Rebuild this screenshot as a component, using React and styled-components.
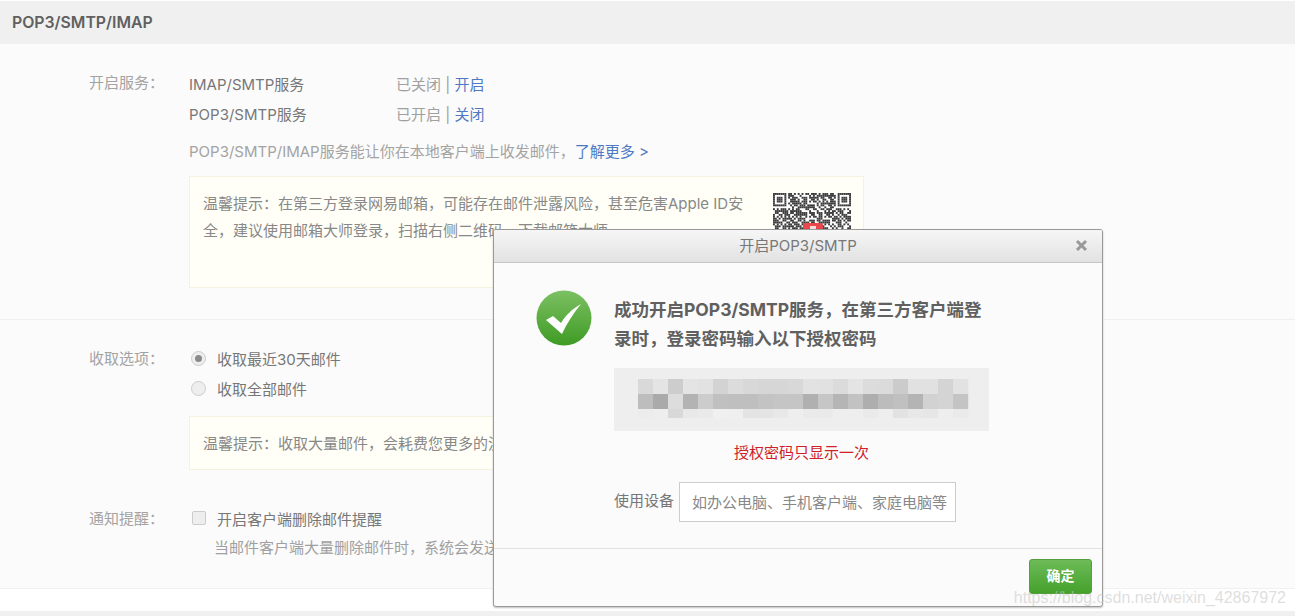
import React from "react";
import styled, { createGlobalStyle } from "styled-components";

const FONT = `Inter, "Noto Sans CJK SC", sans-serif`;

const GlobalStyle = createGlobalStyle`
  html, body {
    margin: 0;
    padding: 0;
    background: #fff;
  }
  body {
    font-family: ${FONT};
    font-size: 15px;
    color: #666;
  }
`;

const Page = styled.div`
  position: relative;
  width: 1295px;
  height: 616px;
  overflow: hidden;
  background: #fff;
  padding-top: 1px;
  box-sizing: border-box;
`;

const Header = styled.h2`
  margin: 0;
  height: 43px;
  line-height: 43px;
  padding-left: 12px;
  background: #f0f0f0;
  font-size: 15.8px;
  font-weight: 600;
  color: #606060;
`;

const Body = styled.div`
  height: 545px;
  background: #fbfbfb;
  border-bottom: 1px solid #f0f0f0;
  box-sizing: border-box;
`;

const Footer = styled.div`
  height: 5px;
  margin-top: 22px;
  background: #f0f0f0;
`;

const Section = styled.section`
  display: grid;
  grid-template-columns: 100px 675px;
  padding: ${(p) => p.$pad || "0"};
  padding-left: 89px;
  border-bottom: ${(p) => (p.$line ? "1px solid #f0f0f0" : "none")};
`;

const Label = styled.div`
  color: #a3a3a3;
  line-height: 30px;
  height: 30px;
  margin-top: ${(p) => p.$top || 0}px;
`;

const Rows = styled.div`
  display: flex;
  flex-direction: column;
`;

const ServiceRow = styled.div`
  display: grid;
  grid-template-columns: 207px auto;
  height: 30px;
  line-height: 29px;
  color: #777;
`;

const Status = styled.span`
  color: #a0a0a0;
`;

const Link = styled.a`
  color: #5079c4;
  text-decoration: none;
`;

const Desc = styled.div`
  margin-top: 7px;
  height: 29px;
  line-height: 30px;
  color: #a3a3a3;
  white-space: nowrap;
`;

const Tip = styled.div`
  display: flex;
  justify-content: space-between;
  box-sizing: border-box;
  width: 675px;
  height: ${(p) => p.$h}px;
  margin-top: ${(p) => p.$top}px;
  padding: ${(p) => p.$pad};
  background: #fffff7;
  border: 1px solid #f3f3e0;
  line-height: 27px;
  color: #888;
`;

const TipText = styled.div`
  width: 548px;
`;

const Qr = styled.svg`
  width: 78px;
  height: 78px;
  margin: 3px 12px 0 0;
  flex: none;
`;

const OptionRow = styled.label`
  display: flex;
  align-items: center;
  box-sizing: border-box;
  height: 30px;
  padding-bottom: 2px;
  color: #777;
`;

const Radio = styled.span`
  box-sizing: border-box;
  display: flex;
  align-items: center;
  justify-content: center;
  width: 15px;
  height: 15px;
  margin: 0 11px 0 2px;
  border-radius: 50%;
  border: 1px solid #ccc;
  background: #eee;
  &::after {
    content: "";
    display: ${(p) => (p.$on ? "block" : "none")};
    width: 7px;
    height: 7px;
    border-radius: 50%;
    background: #8a8a8a;
  }
`;

const Check = styled.span`
  box-sizing: border-box;
  width: 14px;
  height: 14px;
  margin: 0 11px 0 3px;
  border-radius: 2px;
  border: 1px solid #ccc;
  background: #eee;
`;

const Hint = styled.div`
  height: 30px;
  line-height: 28px;
  padding-left: 25px;
  color: #a0a0a0;
`;

const Modal = styled.div`
  position: absolute;
  left: 493px;
  top: 229px;
  width: 610px;
  height: 378px;
  box-sizing: border-box;
  display: flex;
  flex-direction: column;
  background: #fbfbfb;
  border: 1px solid #999;
  border-radius: 3px;
  box-shadow: 0 1px 2px rgba(0, 0, 0, 0.25);
`;

const ModalTitle = styled.div`
  position: relative;
  height: 33px;
  line-height: 31px;
  box-sizing: border-box;
  text-align: center;
  color: #777;
  background: linear-gradient(#f6f6f6, #e2e2e2);
  border-bottom: 1px solid #c6c6c6;
  border-radius: 2px 2px 0 0;
`;

const Close = styled.svg`
  position: absolute;
  right: 14px;
  top: 9px;
  width: 13px;
  height: 13px;
`;

const ModalBody = styled.div`
  flex: 1;
  padding: 27px 0 0 42px;
  border-bottom: 1px solid #e2e2e2;
`;

const Lead = styled.div`
  display: flex;
  gap: 22px;
`;

const Heading = styled.div`
  width: 375px;
  font-size: 17.5px;
  font-weight: 700;
  line-height: 29px;
  color: #606060;
  margin-top: 5px;
`;

const Form = styled.div`
  margin-left: 78px;
  width: 375px;
`;

const Mosaic = styled.svg`
  display: block;
  width: 375px;
  height: 63px;
  margin-top: 15px;
`;

const Warn = styled.div`
  margin-top: 11px;
  height: 22px;
  line-height: 21px;
  text-align: center;
  color: #cf2028;
`;

const Device = styled.div`
  display: flex;
  align-items: center;
  margin-top: 18px;
  color: #777;
  white-space: nowrap;
`;

const DeviceLabel = styled.span`
  padding-bottom: 5px;
`;

const DeviceInput = styled.div`
  box-sizing: border-box;
  width: 277px;
  height: 40px;
  line-height: 39px;
  margin-left: 5px;
  padding-left: 12px;
  white-space: nowrap;
  border: 1px solid #ccc;
  background: #fff;
  color: #888;
`;

const ModalFoot = styled.div`
  display: flex;
  justify-content: flex-end;
  height: 57px;
  padding: 10px 10px 0 0;
  box-sizing: border-box;
`;

const OkButton = styled.button`
  width: 63px;
  height: 35px;
  padding: 0 0 3px;
  font: 700 14px ${FONT};
  color: #fff;
  background: linear-gradient(#6dbb58, #45a12c);
  border: 1px solid #53a03c;
  border-radius: 3px;
`;

const Watermark = styled.div`
  position: absolute;
  right: 9px;
  top: 588px;
  font: 16px "Liberation Sans", sans-serif;
  line-height: 20px;
  color: rgba(200, 200, 200, 0.6);
`;

const row1 = ["d9", "e4", "cd", "e4", "e2", "d3", "dc", "d8", "d6", "d6", "d8", "e2", "e1", "db", "e4", "dc", "db", "cb", "e1", "e1", "d4", "e2"];
const row2 = ["bd", "aa", "dd", "b3", "cc", "c0", "bf", "bf", "c3", "c5", "c5", "b0", "c6", "b5", "c2", "ae", "bc", "c0", "b4", "d2", "d4", "c4"];
const row3 = ["ec", "ee", "d8", "e8", "ea", "f0", "ef", "e4", "e4", "e8", "ee", "ea", "ea", "ee", "ee", "ea", "ee", "e2", "e8", "e6", "ee", "ea"];

const QR_SIZE = 41;
const QR_ROWS = 20;
const MODULE = 78 / QR_SIZE;

// fake qr data: fixed noise plus the two finder squares on top
function qrDark(x, y) {
  const inFinder = (ox) => x >= ox && x < ox + 7 && y < 7;
  const ox = inFinder(0) ? 0 : inFinder(34) ? 34 : -1;
  if (ox >= 0) {
    const dx = x - ox;
    const ring = dx === 0 || dx === 6 || y === 0 || y === 6;
    const core = dx >= 2 && dx <= 4 && y >= 2 && y <= 4;
    return ring || core;
  }
  if ((x === 7 && y < 8) || (x === 33 && y < 8) || (y === 7 && (x < 8 || x > 32))) return false;
  return (x * 7 + y * 13 + ((x * y) % 11) * 5 + ((x ^ y) % 7)) % 5 < 3;
}

function QrCode() {
  const cells = [];
  for (let y = 0; y < QR_ROWS; y++) {
    for (let x = 0; x < QR_SIZE; x++) {
      if (qrDark(x, y)) {
        cells.push(<rect key={x + "-" + y} x={x * MODULE} y={y * MODULE} width={MODULE} height={MODULE} fill="#3a3a3a" />);
      }
    }
  }
  return (
    <Qr viewBox="0 0 78 78">
      <rect width="78" height="78" fill="#fff" />
      {cells}
      <rect x="30" y="30" width="20" height="18" rx="3" fill="#e8474c" />
      <rect x="37" y="33" width="6" height="3" fill="#fff" opacity="0.8" />
    </Qr>
  );
}

function PasswordMosaic() {
  return (
    <Mosaic viewBox="0 0 375 63">
      <rect width="375" height="63" fill="#eeeeee" />
      {[row1, row2, row3].map((row, r) =>
        row.map((c, i) => (
          <rect
            key={r + "-" + i}
            x={24 + i * 15}
            y={11 + r * 15}
            width="15.2"
            height={r === 2 ? 9 : 15.2}
            fill={"#" + c + c + c}
          />
        ))
      )}
    </Mosaic>
  );
}

function SuccessIcon() {
  return (
    <svg width="56" height="56" viewBox="0 0 56 56" style={{ flex: "none" }}>
      <defs>
        <linearGradient id="okGrad" x1="0" y1="0" x2="0" y2="1">
          <stop offset="0" stopColor="#7cc063" />
          <stop offset="1" stopColor="#3f9b24" />
        </linearGradient>
      </defs>
      <circle cx="28" cy="28" r="27.5" fill="url(#okGrad)" />
      <path d="M10 30 L17 26 L25 33 C30 25 36 19 45 14 C37 24 31 33 26 44 Z" fill="#fff" />
    </svg>
  );
}

export default function App() {
  return (
    <Page>
      <GlobalStyle />
      <Header>POP3/SMTP/IMAP</Header>
      <Body>
        <Section $pad="26px 0 31px" $line>
          <Label $top={-2}>开启服务：</Label>
          <Rows>
            <ServiceRow>
              <span>IMAP/SMTP服务</span>
              <Status>
                已关闭 | <Link>开启</Link>
              </Status>
            </ServiceRow>
            <ServiceRow>
              <span>POP3/SMTP服务</span>
              <Status>
                已开启 | <Link>关闭</Link>
              </Status>
            </ServiceRow>
            <Desc>
              POP3/SMTP/IMAP服务能让你在本地客户端上收发邮件，<Link>了解更多 &gt;</Link>
            </Desc>
            <Tip $h={112} $top={10} $pad="13px 0 0 13px">
              <TipText>
                温馨提示：在第三方登录网易邮箱，可能存在邮件泄露风险，甚至危害Apple ID安全，建议使用邮箱大师登录，扫描右侧二维码，下载邮箱大师。
              </TipText>
              <QrCode />
            </Tip>
          </Rows>
        </Section>
        <Section $pad="24px 0 34px">
          <Label>收取选项：</Label>
          <Rows>
            <OptionRow>
              <Radio $on />
              收取最近30天邮件
            </OptionRow>
            <OptionRow>
              <Radio />
              收取全部邮件
            </OptionRow>
            <Tip $h={54} $top={12} $pad="13px 0 0 13px">
              <TipText>温馨提示：收取大量邮件，会耗费您更多的流量。</TipText>
            </Tip>
          </Rows>
        </Section>
        <Section>
          <Label>通知提醒：</Label>
          <Rows>
            <OptionRow>
              <Check />
              开启客户端删除邮件提醒
            </OptionRow>
            <Hint>当邮件客户端大量删除邮件时，系统会发送提醒邮件</Hint>
          </Rows>
        </Section>
      </Body>
      <Footer />
      <Modal>
        <ModalTitle>
          开启POP3/SMTP
          <Close viewBox="0 0 13 13">
            <path d="M2 2 L11 11 M11 2 L2 11" stroke="#999" strokeWidth="3" />
          </Close>
        </ModalTitle>
        <ModalBody>
          <Lead>
            <SuccessIcon />
            <Heading>成功开启POP3/SMTP服务，在第三方客户端登录时，登录密码输入以下授权密码</Heading>
          </Lead>
          <Form>
            <PasswordMosaic />
            <Warn>授权密码只显示一次</Warn>
            <Device>
              <DeviceLabel>使用设备</DeviceLabel>
              <DeviceInput>如办公电脑、手机客户端、家庭电脑等</DeviceInput>
            </Device>
          </Form>
        </ModalBody>
        <ModalFoot>
          <OkButton>确定</OkButton>
        </ModalFoot>
      </Modal>
      <Watermark>https://blog.csdn.net/weixin_42867972</Watermark>
    </Page>
  );
}
